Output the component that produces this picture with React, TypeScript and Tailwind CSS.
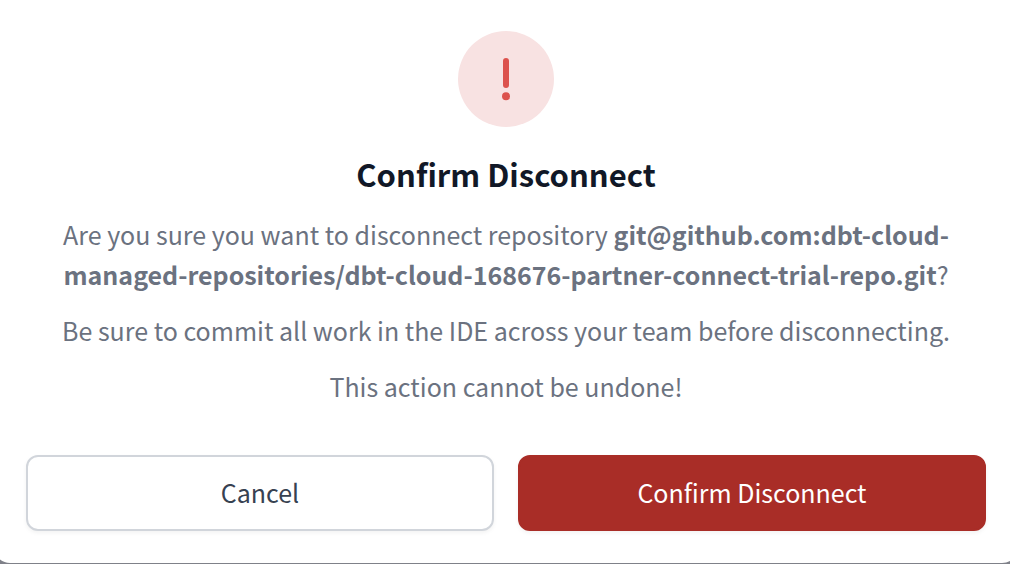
export default function App() {
  return (
    <div className="overflow-hidden bg-[#7f8189] pb-px font-['Noto_Sans_CJK_SC','Noto_Sans',sans-serif]">
      <div
        role="alertdialog"
        aria-labelledby="dialog-title"
        aria-describedby="dialog-body"
        className="-ml-1.5 -mr-2 rounded-b-2xl bg-white px-8 pb-8 pt-[31px] text-center"
      >
        <div className="mx-auto flex size-24 items-center justify-center rounded-full bg-[#f8e2e2]">
          <svg viewBox="0 0 48 48" className="size-12 text-[#dc524d]" fill="currentColor" aria-hidden="true">
            <rect x="21" y="3" width="6" height="30" rx="3" />
            <circle cx="24" cy="41.3" r="4" />
          </svg>
        </div>
        <h2 id="dialog-title" className="mt-6 text-[31px] font-bold leading-[46px] text-[#111827]">
          Confirm Disconnect
        </h2>
        <div id="dialog-body" className="mt-[17px] flex flex-col gap-4 text-[25px] leading-10 text-[#6b7280]">
          <p>
            Are you sure you want to disconnect repository{" "}
            <strong className="font-bold">
              git@github.com:dbt-cloud-managed-repositories/dbt-cloud-168676-partner-connect-trial-repo.git
            </strong>
            ?
          </p>
          <p>Be sure to commit all work in the IDE across your team before disconnecting.</p>
          <p>This action cannot be undone!</p>
        </div>
        <div className="mt-[49px] grid grid-cols-2 gap-6 text-[25px] leading-10">
          <button
            type="button"
            className="rounded-xl border-2 border-[#d1d5db] bg-white pb-[17px] pt-[15px] text-[#374151] shadow-[0_2px_4px_rgba(0,0,0,0.05)]"
          >
            Cancel
          </button>
          <button
            type="button"
            className="rounded-xl border-2 border-[#a92d27] bg-[#a92d27] pb-[17px] pt-[15px] text-white shadow-[0_2px_4px_rgba(0,0,0,0.05)]"
          >
            Confirm Disconnect
          </button>
        </div>
      </div>
    </div>
  );
}
